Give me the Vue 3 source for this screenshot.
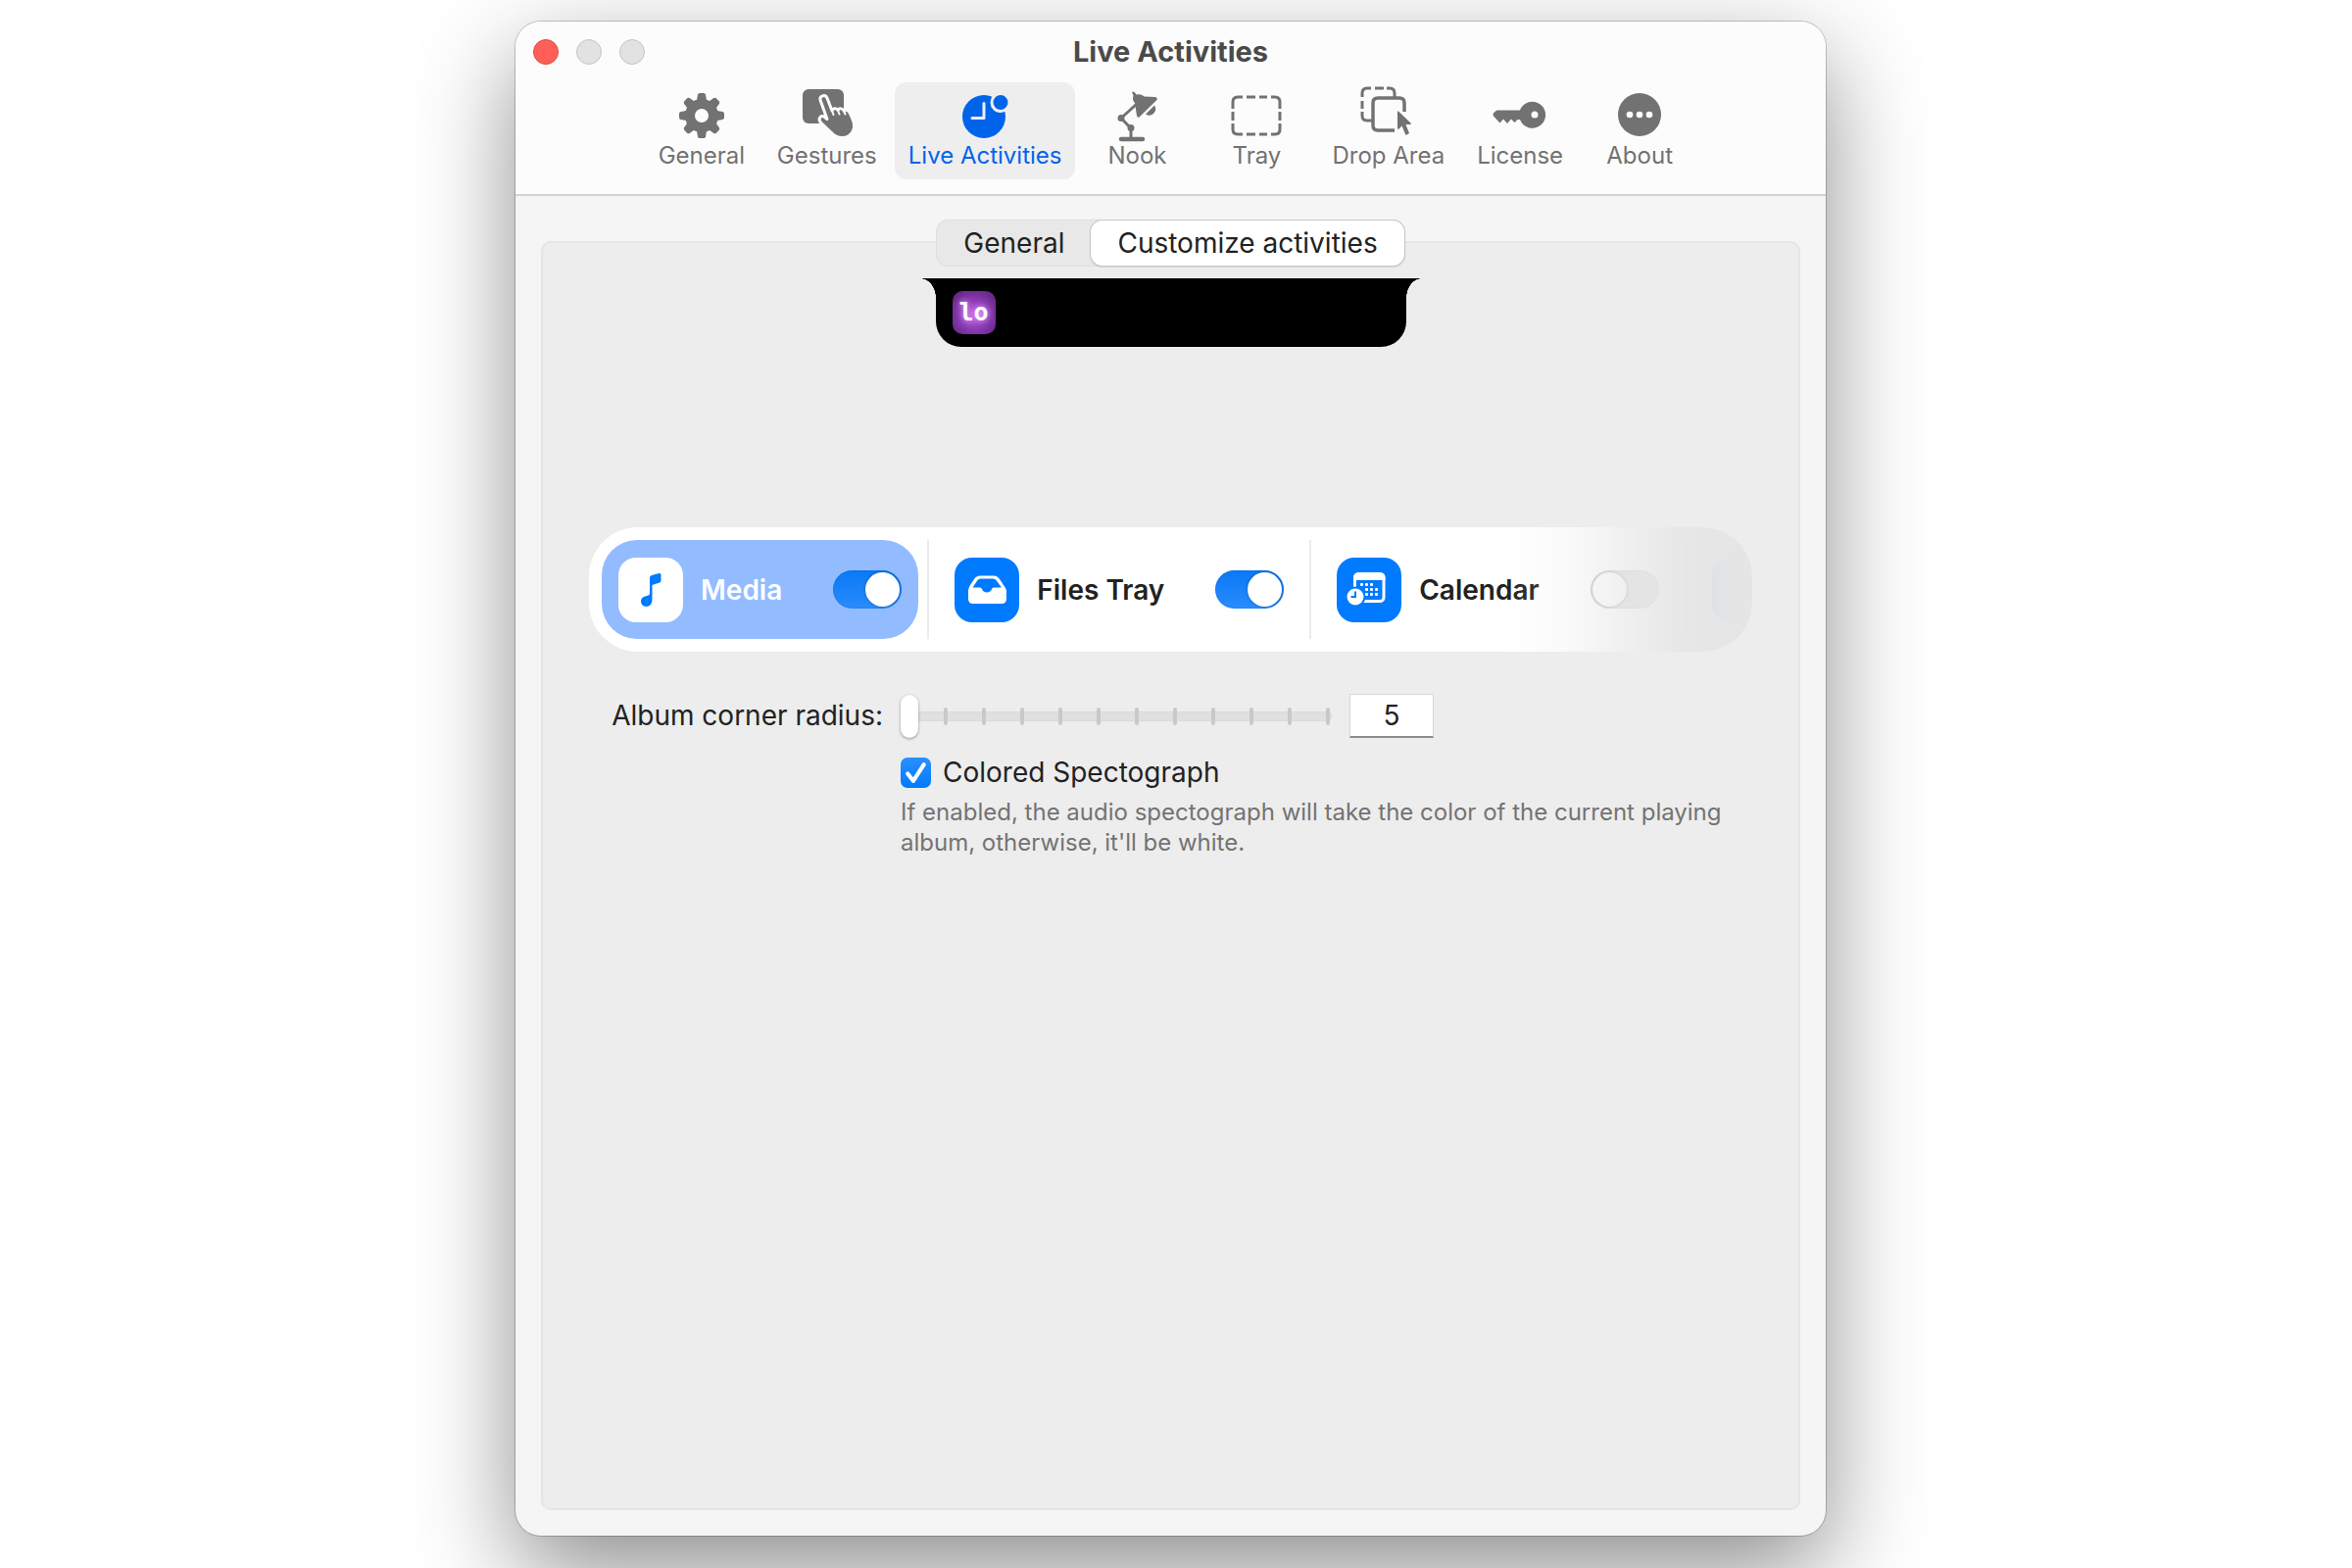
<script setup>
import { ref } from 'vue'

const tabs = ['General', 'Gestures', 'Live Activities', 'Nook', 'Tray', 'Drop Area', 'License', 'About']
const activeTab = ref('Live Activities')

const segments = ['General', 'Customize activities']
const activeSegment = ref('Customize activities')

const activities = ref([
  { id: 'media', name: 'Media', enabled: true },
  { id: 'files', name: 'Files Tray', enabled: true },
  { id: 'calendar', name: 'Calendar', enabled: false },
])
const selected = ref('media')

const radius = ref(5)
const colored = ref(true)
</script>

<template>
  <div class="desktop">
    <main class="window">
      <header class="toolbar">
        <div class="titlebar">
          <div class="lights">
            <button class="light close" aria-label="Close"></button>
            <button class="light" aria-label="Minimize"></button>
            <button class="light" aria-label="Zoom"></button>
          </div>
          <h1>Live Activities</h1>
        </div>
        <nav class="tabs">
          <button
            v-for="tab in tabs"
            :key="tab"
            class="tab"
            :class="{ active: tab === activeTab }"
            @click="activeTab = tab"
          >
            <svg v-if="tab === 'General'" class="icon" viewBox="0 0 60 52">
              <g fill="currentColor">
                <path v-for="n in 8" :key="n" d="M24.6 13 26 4.600 Q26.400 3 28 3 H32 Q33.600 3 34 4.600 L35.400 13Z" :transform="`rotate(${n * 45} 30 26)`" />
              </g>
              <circle cx="30" cy="26" r="12" fill="none" stroke="currentColor" stroke-width="10" />
            </svg>
            <svg v-else-if="tab === 'Gestures'" class="icon" viewBox="0 0 60 52">
              <rect x="5" y="-1" width="42" height="35" rx="6" fill="currentColor" />
              <path
                d="M23 10c-1-4 5-6.500 7-2l5 13c1-3 5-3 6-.5 1.500-2.500 5-2 6 .5 2-1.500 5-.5 6 2 4 8 6.500 14 3 19.500-5 8-16 7.500-21.500 1L23.500 33c-3.500-4 .5-8.500 4-5.500l2.500 2Z"
                fill="currentColor"
                stroke="#fcfcfc"
                stroke-width="3"
                stroke-linejoin="round"
              />
              <path d="m35 21 1.500 4M41 20.500l1.500 4M47 21l1.500 3.500" stroke="#fcfcfc" stroke-width="2" stroke-linecap="round" />
            </svg>
            <svg v-else-if="tab === 'Live Activities'" class="icon" viewBox="0 0 60 52">
              <circle cx="29" cy="27" r="22" fill="currentColor" />
              <path d="M29 13.500v15H17" fill="none" stroke="#eee" stroke-width="3" stroke-linecap="round" stroke-linejoin="round" />
              <circle cx="46" cy="12.500" r="9" fill="currentColor" stroke="#eee" stroke-width="3" />
            </svg>
            <svg v-else-if="tab === 'Nook'" class="icon" viewBox="0 0 60 52">
              <g transform="translate(-6 0)">
                <path d="M20 50h22" stroke="currentColor" stroke-width="4.500" stroke-linecap="round" />
                <path d="M30 50V39L20 28.500 36 14" fill="none" stroke="currentColor" stroke-width="3" stroke-linejoin="round" />
                <circle cx="20" cy="28.500" r="3.500" fill="currentColor" />
                <circle cx="30" cy="38.500" r="3.500" fill="currentColor" />
                <path d="M31 2q2-1.500 3.500 1l1 1.500q5-1 8 2l11.500.5q2.500 1 1.500 3L38.500 27.500q-2 1-2.500-1.500L34 13q-3-3-1.500-7.500Z" fill="currentColor" />
                <path d="M54 15.500a6.500 6.500 0 0 1-9 9Z" fill="currentColor" />
              </g>
            </svg>
            <svg v-else-if="tab === 'Tray'" class="icon" viewBox="0 0 60 52">
              <path
                d="M6 19v-7q0-5 5-5h5M20 7h9M33 7h8M45 7h4q5 0 5 5v7M54 22v9M54 34v6q0 5-5 5h-4M41 45h-8M29 45h-9M16 45h-5q-5 0-5-5v-6M6 31v-9"
                fill="none"
                stroke="currentColor"
                stroke-width="3"
              />
            </svg>
            <svg v-else-if="tab === 'Drop Area'" class="icon" viewBox="0 0 60 52">
              <g transform="translate(-1 -1)">
                <path d="M4 8V4q0-5 5-5h4M17-1h9M29-1h3q5 0 5 5v5M4 12v8M4 23v4q0 5 5 5h5" fill="none" stroke="currentColor" stroke-width="3" />
                <path d="M47 23V14q0-5-5-5H20q-5 0-5 5v23q0 5 5 5h17" fill="none" stroke="currentColor" stroke-width="3.500" />
                <path d="M40 23.500q0-2 1.500-.5l12 11.500q1 1.500-1 1.500h-4l3.500 9-3.500 2-4-9.500-3 3q-1.500 1-1.500-1Z" fill="currentColor" />
              </g>
            </svg>
            <svg v-else-if="tab === 'License'" class="icon" viewBox="0 0 60 52">
              <path d="M30 20.500a13.500 13.500 0 1 1 0 9.500h-2.500l-3 3-3.500-3.500-4 4.500-4-4.500-3.500 4L3 26.500q-1-1.500 0-3l2-2q1-1 2-1Zm18.500 4.500a3.500 3.500 0 1 0-7 0 3.500 3.500 0 0 0 7 0Z" fill="currentColor" fill-rule="evenodd" />
            </svg>
            <svg v-else class="icon" viewBox="0 0 60 52">
              <circle cx="30" cy="25" r="22" fill="currentColor" />
              <circle v-for="x in [20, 30, 40]" :key="x" :cx="x" cy="25" r="3.300" fill="#fcfcfc" />
            </svg>
            <span>{{ tab }}</span>
          </button>
        </nav>
      </header>

      <section class="content">
        <div class="panel">
          <div class="segmented">
            <button
              v-for="segment in segments"
              :key="segment"
              :class="{ active: segment === activeSegment }"
              @click="activeSegment = segment"
            >{{ segment }}</button>
          </div>

          <div class="notch">
            <div class="album">lo</div>
          </div>

          <div class="picker">
            <template v-for="activity in activities" :key="activity.id">
              <div class="activity" :class="{ selected: activity.id === selected }" @click="selected = activity.id">
                <svg v-if="activity.id === 'media'" class="tile" viewBox="0 0 66 66">
                  <path d="M32 20.500q0-2 2-2.500l7.500-2q2-.5 2 1.500v6q0 1.500-1.500 2L34.500 28v15c0 9-11.500 9-11.500 1.500 0-3 2-4.500 5-5.200 3-.7 4-1.300 4-3Z" fill="#007aff" />
                </svg>
                <svg v-else-if="activity.id === 'files'" class="tile" viewBox="0 0 66 66">
                  <path d="M14 34c0-2 1-4 2-6l4-6q2-3.500 6-3.500h14q4 0 6 3.500l4 6q3 4 3 6v8q0 5-5 5H19q-5 0-5-5Z" fill="#fff" />
                  <path d="M18.500 30.500 23.500 23q1-1.500 3-1.500h13q2 0 3 1.500l5.500 7.500H40q-1.500 0-2 1.500c-1 4.500-9 4.500-10 0q-.5-1.500-2-1.500Z" fill="#007aff" />
                </svg>
                <svg v-else class="tile" viewBox="0 0 66 66">
                  <rect x="18.500" y="16.500" width="29.500" height="28" rx="4" fill="none" stroke="#fff" stroke-width="3" />
                  <path d="M17 23v-2q0-6 6-6h20.500q6 0 6 6v2Z" fill="#fff" />
                  <g fill="#fff">
                    <rect v-for="n in 9" :key="n" :x="n < 4 ? 19 + n * 5 : 29 + ((n - 4) % 3) * 5" :y="n < 4 ? 26 : n < 7 ? 31 : 36" width="3" height="3" rx="1" />
                  </g>
                  <circle cx="19" cy="40" r="9.500" fill="#fff" stroke="#007aff" stroke-width="2" />
                  <path d="M19 34.500V40h-4.500" fill="none" stroke="#007aff" stroke-width="2" />
                </svg>
                <label :for="activity.id">{{ activity.name }}</label>
                <input :id="activity.id" v-model="activity.enabled" type="checkbox" class="switch" @click.stop />
              </div>
              <div class="divider"></div>
            </template>
            <div class="activity">
              <div class="tile faded"></div>
            </div>
          </div>

          <div class="form">
            <label class="row-label" for="radius">Album corner radius:</label>
            <div class="radius">
              <div class="slider">
                <div class="ticks"><i v-for="n in 12" :key="n"></i></div>
                <input id="radius" v-model.number="radius" type="range" min="5" max="16" />
              </div>
              <input v-model.number="radius" class="value" type="text" aria-label="Album corner radius value" />
            </div>
            <div class="option">
              <label class="check">
                <span class="box">
                  <input v-model="colored" type="checkbox" />
                  <svg v-if="colored" viewBox="0 0 30 30"><path d="m7 16 5.500 7L23 7" /></svg>
                </span>
                Colored Spectograph
              </label>
              <p>If enabled, the audio spectograph will take the color of the current playing album, otherwise, it'll be white.</p>
            </div>
          </div>
        </div>
      </section>
    </main>
  </div>
</template>

<style>
body { background: #fff; }
</style>

<style scoped>
* { box-sizing: border-box; }
button, input { font: inherit; color: inherit; border: 0; margin: 0; padding: 0; }
svg { display: block; overflow: visible; }

.desktop {
  min-height: 100vh;
  padding: 22px 537px 33px 526px;
  display: flex;
  overflow: hidden;
  font-family: Inter, "Liberation Sans", sans-serif;
  font-size: 28px;
  color: #222;
}
.window {
  flex: 1;
  min-width: 0;
  display: flex;
  flex-direction: column;
  border-radius: 26px;
  background: #f5f5f5;
  box-shadow: 0 0 0 1px rgba(0, 0, 0, 0.2), 0 36px 100px rgba(0, 0, 0, 0.45);
}

.toolbar { background: #fcfcfc; border-bottom: 2px solid #d3d3d3; border-radius: 26px 26px 0 0; padding-bottom: 15px; }
.titlebar { display: grid; grid-template-columns: 1fr auto 1fr; align-items: center; height: 62px; padding: 0 18px; }
.titlebar h1 { margin: 0; font-size: 29px; line-height: 34px; font-weight: 700; color: #4a4a4a; }
.lights { display: flex; gap: 18px; }
.light { width: 26px; height: 26px; border-radius: 50%; background: #e2e2e2; border: 1px solid #c4c4c4; }
.light.close { background: #ff5f57; border-color: #e2463f; }

.tabs { display: flex; justify-content: center; gap: 4px; }
.tab {
  min-width: 118px;
  height: 99px;
  padding: 8px 14px;
  display: flex;
  flex-direction: column;
  align-items: center;
  background: none;
  border-radius: 12px;
  font-size: 24px;
  line-height: 30px;
  white-space: nowrap;
  color: #727272;
}
.tab.active { background: #eee; color: #0064eb; }
.icon { width: 60px; height: 52px; }

.content { flex: 1; display: flex; padding: 46px 26px 26px; }
.panel {
  flex: 1;
  min-width: 0;
  display: flex;
  flex-direction: column;
  align-items: center;
  padding: 0 47px;
  background: #ededed;
  border: 2px solid #e5e5e5;
  border-radius: 10px;
}

.segmented { display: flex; height: 48px; margin-top: -24px; background: #e8e8e8; border: 1px solid #dedede; border-radius: 12px; }
.segmented button { padding: 0 27px; background: none; border-radius: 12px; line-height: 44px; white-space: nowrap; }
.segmented button.active { background: #fff; box-shadow: 0 0 0 1px #c8c8c8, 0 1px 2px rgba(0, 0, 0, 0.3); }

.notch {
  position: relative;
  width: 480px;
  height: 70px;
  margin-top: 12px;
  padding: 13px 17px;
  background: #000;
  border-radius: 0 0 26px 26px;
}
.notch::before,
.notch::after { content: ""; position: absolute; top: 0; width: 16px; height: 20px; }
.notch::before { right: 100%; background: radial-gradient(ellipse 16px 20px at 0 100%, transparent 98%, #000); }
.notch::after { left: 100%; background: radial-gradient(ellipse 16px 20px at 100% 100%, transparent 98%, #000); }
.album {
  width: 44px;
  height: 44px;
  border-radius: 10px;
  background: radial-gradient(circle at 50% 55%, #b455d8 10%, #8638b0 50%, #55206f);
  font: 700 25px/43px "DejaVu Sans Mono", monospace;
  text-align: center;
  color: #fff;
  text-shadow: 0 0 6px #f0b0ff;
}

.picker {
  position: relative;
  align-self: stretch;
  display: flex;
  align-items: stretch;
  gap: 9px;
  height: 127px;
  margin-top: 184px;
  padding: 13px;
  overflow: hidden;
  background: #fff;
  border-radius: 50px;
}
/* fades the overflowing activities out on the right */
.picker::after {
  content: "";
  position: absolute;
  inset: 0;
  background: linear-gradient(
    to right,
    rgba(229, 229, 229, 0) calc(100% - 250px),
    rgba(229, 229, 229, 0.2) calc(100% - 190px),
    rgba(229, 229, 229, 0.9) calc(100% - 80px),
    rgba(229, 229, 229, 0.97) calc(100% - 40px),
    rgb(229, 229, 229) calc(100% - 16px)
  );
  pointer-events: none;
}
.activity { flex: none; display: flex; align-items: center; padding: 0 17px; border-radius: 36px; font-weight: 600; }
.activity.selected { background: #92bcff; color: #fff; }
.activity label { margin: 0 52px 0 18px; white-space: nowrap; }
.tile { flex: none; width: 66px; height: 66px; border-radius: 18px; background: #007aff; }
.selected .tile { background: #fff; }
.tile.faded { background: linear-gradient(to right, #007aff, rgba(0, 122, 255, 0) 30px); }
.divider { flex: none; width: 2px; background: #ebebeb; }

.switch {
  appearance: none;
  flex: none;
  width: 70px;
  height: 39px;
  padding: 2px;
  border-radius: 20px;
  background: #e2e2e2;
  box-shadow: inset 0 0 2px rgba(0, 0, 0, 0.2);
}
.switch::before {
  content: "";
  display: block;
  width: 35px;
  height: 35px;
  border-radius: 50%;
  background: #fff;
  box-shadow: 0 0 3px rgba(0, 0, 0, 0.35);
}
.switch:checked { background: linear-gradient(#0a78f5, #2a8cff); }
.switch:checked::before { margin-left: auto; }

.form {
  align-self: stretch;
  display: grid;
  grid-template-columns: 300px 1fr;
  column-gap: 18px;
  margin-top: 43px;
}
.row-label { text-align: right; line-height: 44px; white-space: nowrap; }
.radius { display: flex; align-items: center; gap: 18px; }
.slider { position: relative; width: 440px; height: 44px; display: flex; align-items: center; }
.slider input { appearance: none; position: relative; width: 100%; height: 44px; background: none; }
.slider input::-webkit-slider-thumb {
  appearance: none;
  width: 18px;
  height: 44px;
  border-radius: 9px;
  background: #fff;
  box-shadow: 0 1px 3px rgba(0, 0, 0, 0.4);
}
.slider::before { content: ""; position: absolute; left: 4px; right: 0; height: 8px; background: #e0e0e0; border: 1px solid #dadada; border-radius: 4px; }
.ticks { position: absolute; inset: 13px 2px 13px 5px; display: flex; justify-content: space-between; }
.ticks i { width: 4px; background: #c9c9c9; border-radius: 2px; }
.value { width: 86px; height: 45px; background: #fff; border: 1px solid #d6d6d6; border-bottom: 2px solid #8c8c8c; text-align: center; }

.option { grid-column: 2; margin-top: 17px; }
.check { display: flex; align-items: center; gap: 12px; line-height: 36px; }
.box { position: relative; width: 31px; height: 31px; }
.box input { appearance: none; display: block; width: 31px; height: 31px; border-radius: 7px; background: #fff; }
.box input:checked { background: linear-gradient(#2b90ff, #007aff); }
.box svg { position: absolute; inset: 0; pointer-events: none; }
.box path { fill: none; stroke: #fff; stroke-width: 4; stroke-linecap: round; stroke-linejoin: round; }
.option p { margin: 7px 0 0; font-size: 24px; line-height: 31px; color: #737373; }
</style>
